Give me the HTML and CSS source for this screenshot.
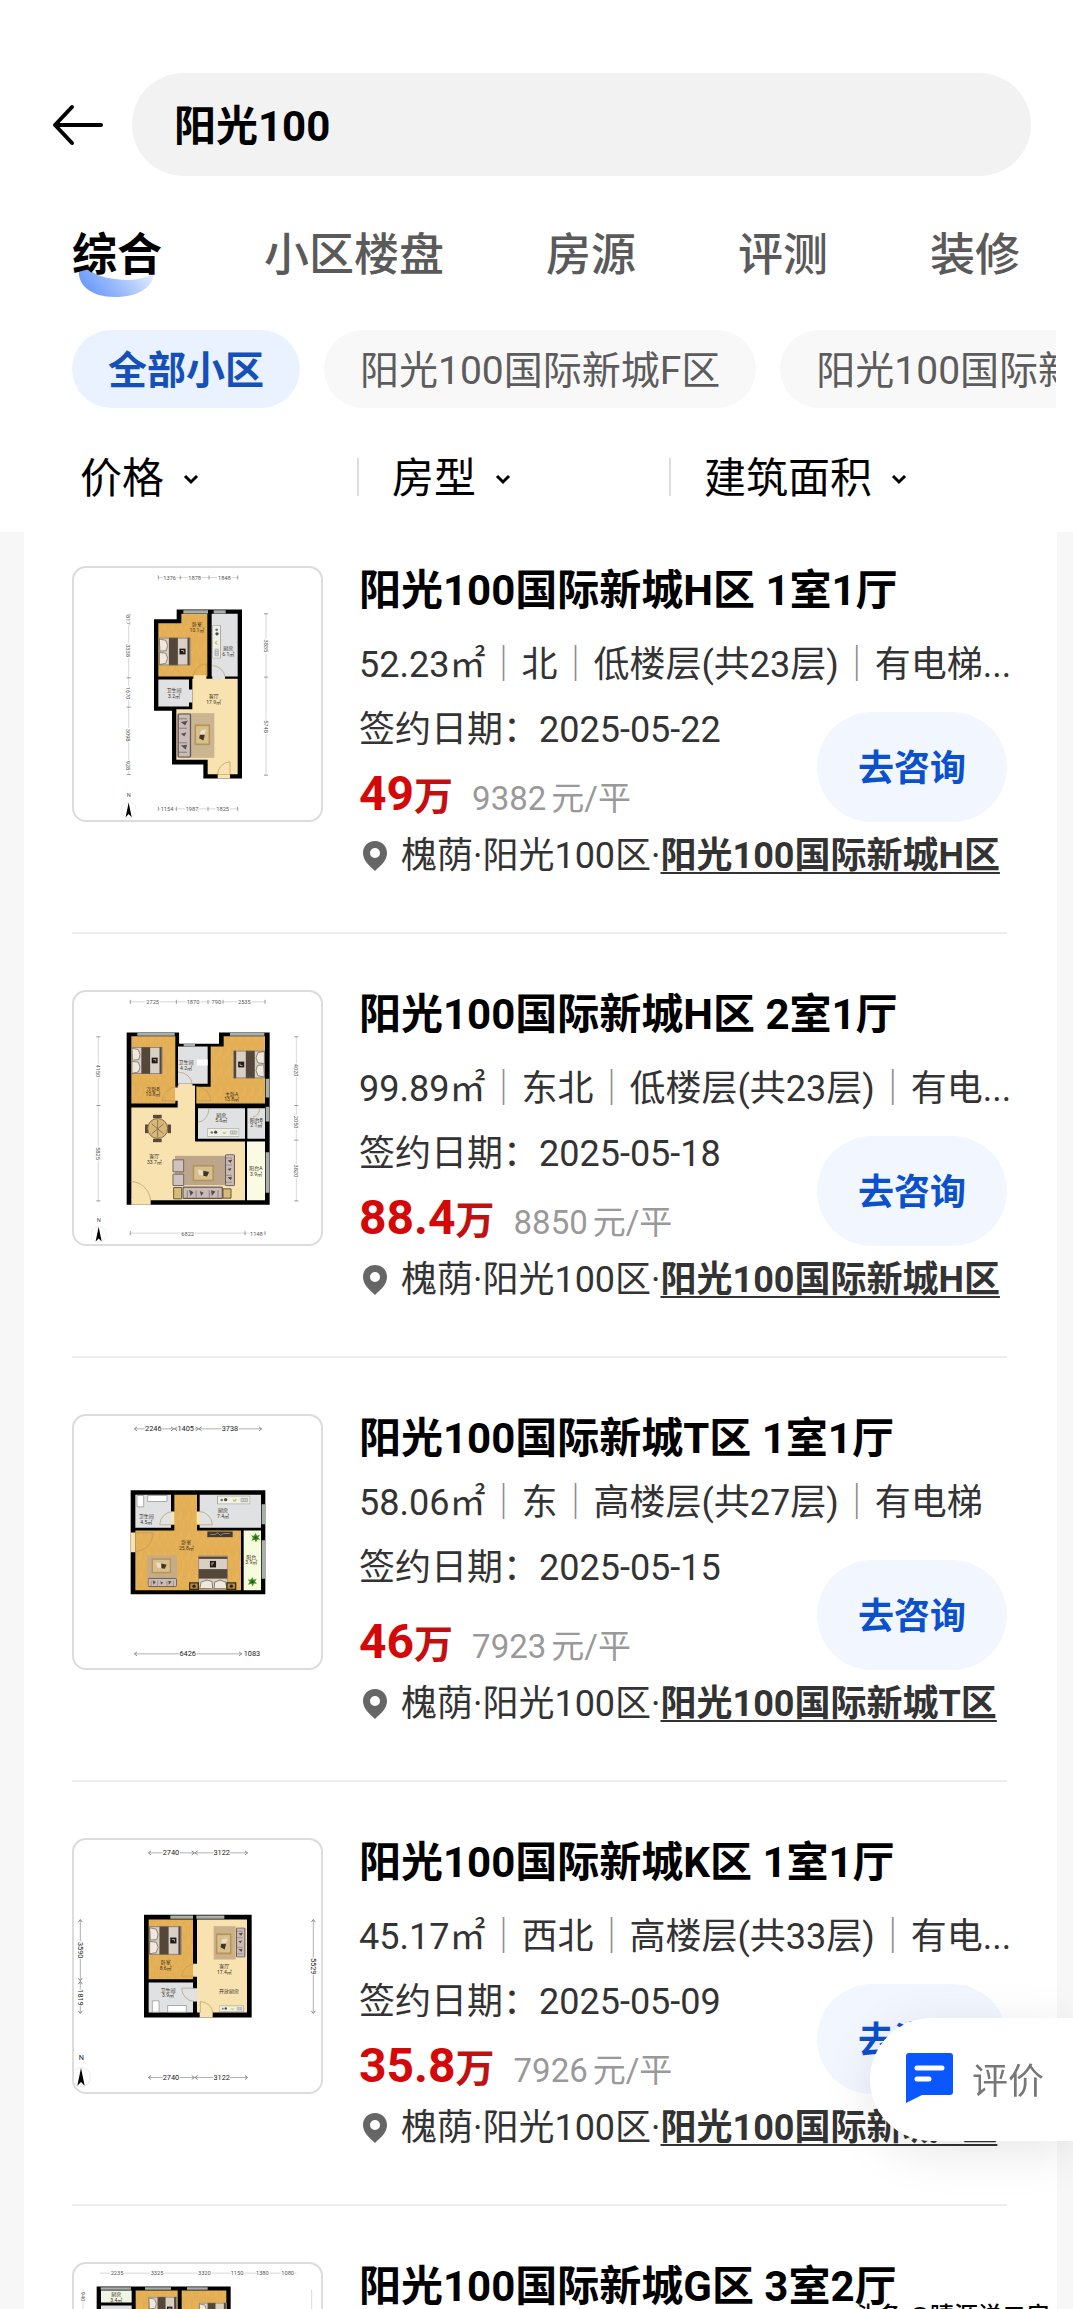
FILE: index.html
```html
<!DOCTYPE html>
<html lang="zh-CN">
<head>
    <meta charset="UTF-8">
    <meta name="viewport" content="width=device-width, initial-scale=1">
    <title>阳光100</title>
    <link rel="stylesheet" href="styles.css">
</head>
<body>

    <!-- 公用图形 -->
    <svg class="defs" width="0" height="0" aria-hidden="true">
        <defs>
            <linearGradient id="smile" x1="0" y1="0.3" x2="1" y2="0">
                <stop offset="0" stop-color="#6f9dfb"/>
                <stop offset="0.4" stop-color="#9dbcfd"/>
                <stop offset="1" stop-color="#edf3ff"/>
            </linearGradient>
            <pattern id="wood" width="24" height="60" patternUnits="userSpaceOnUse">
                <rect width="24" height="60" fill="#e6b259"/>
                <path d="M4 0v34M12 20v40M20 0v48" stroke="#dba54c" stroke-width="2"/>
            </pattern>
            <symbol id="bed" viewBox="0 0 100 86">
                <rect width="100" height="86" fill="#d9cfc4"/>
                <path d="M2 4l20 4 6 16-4 16-20 2zM2 46l20 2 6 16-6 16-20 4z" fill="#efe8dc" stroke="#8b8172" stroke-width="3"/>
                <rect x="32" width="28" height="86" fill="#55463a"/>
                <rect x="90" width="7" height="86" fill="#55463a"/>
                <rect x="65" y="34" width="19" height="18" fill="#1d1a18"/>
                <path d="M70 40h8v6" stroke="#b0a79a" stroke-width="3" fill="none"/>
                <rect x="1" y="1" width="98" height="84" fill="none" stroke="#6f6254" stroke-width="2"/>
            </symbol>
            <symbol id="sofa" viewBox="0 0 130 40">
                <rect width="130" height="40" rx="4" fill="#c9bcb8"/>
                <rect x="2" y="2" width="126" height="36" rx="4" fill="none" stroke="#63564f" stroke-width="4"/>
                <path d="M16 12v24M44 12v24M86 12v24M114 12v24" stroke="#8c7e78" stroke-width="3"/>
                <path d="M22 10l14 8-10 12zM92 12l14 4-12 14zM56 14l12 6-8 10z" fill="#5a4c46"/>
            </symbol>
            <symbol id="table" viewBox="0 0 60 46">
                <rect width="60" height="46" fill="#b5935c"/>
                <rect x="5" y="5" width="50" height="36" fill="#d8c08d"/>
                <path d="M14 12l14 4 4 14-14-2z" fill="#eadfca"/>
                <path d="M30 16l16 4-6 12-10-2z" fill="#453321"/>
            </symbol>
            <symbol id="stove" viewBox="0 0 100 26">
                <rect x="1" y="1" width="98" height="24" fill="#f1f0e8" stroke="#8f9285" stroke-width="2"/>
                <circle cx="14" cy="13" r="4" fill="#777"/>
                <circle cx="26" cy="12" r="5" fill="#4c4c40"/>
                <path d="M46 8l6 6 8-6-4 10h-6z" fill="#c9c35a"/>
                <path d="M72 8h20v10h-20zM79 8v10M86 8v10" fill="#ddd" stroke="#999" stroke-width="2"/>
            </symbol>
            <symbol id="compass" viewBox="0 0 60 100">
                <circle cx="30" cy="64" r="31" fill="none" stroke="#ddd" stroke-width="2"/>
                <path d="M30 34L42 92 30 80 18 92z" fill="#000"/>
            </symbol>
            <symbol id="plant" viewBox="0 0 30 30">
                <path d="M15 1l4 8 9-3-5 8 6 7-9-1-4 9-4-8-10 3 5-9-6-7 9 1z" fill="#3f8f25"/>
                <circle cx="15" cy="15" r="4" fill="#20570f"/>
            </symbol>
        </defs>
    </svg>

    <header class="top">
        <div class="search-row">
            <button class="back" aria-label="返回">
                <svg width="54" height="42" viewBox="0 0 54 42">
                    <path d="M20 3L3 21l17 18M3 21h46" fill="none" stroke="#000" stroke-width="4" stroke-linecap="round" stroke-linejoin="round"/>
                </svg>
            </button>
            <input class="search" type="text" value="阳光100" aria-label="搜索">
        </div>

        <nav class="tabs">
            <a class="tab active" href="#">综合
                <svg class="smile" width="78" height="28" viewBox="0 0 78 28">
                    <path d="M2 0C0 16 14 28 38 28C62 28 76 18 77 4C66 11 54 12 38 10C22 9 16 2 8 0z" fill="url(#smile)"/>
                </svg>
            </a>
            <a class="tab" href="#">小区楼盘</a>
            <a class="tab" href="#">房源</a>
            <a class="tab" href="#">评测</a>
            <a class="tab" href="#">装修</a>
        </nav>

        <div class="chips">
            <button class="chip selected">全部小区</button>
            <button class="chip">阳光100国际新城F区</button>
            <button class="chip">阳光100国际新城H区</button>
        </div>

        <div class="filters">
            <button class="filter">价格
                <svg class="arrow" width="16" height="12" viewBox="0 0 16 12"><path d="M2 3l6 6 6-6"/></svg>
            </button>
            <button class="filter">房型
                <svg class="arrow" width="16" height="12" viewBox="0 0 16 12"><path d="M2 3l6 6 6-6"/></svg>
            </button>
            <button class="filter">建筑面积
                <svg class="arrow" width="16" height="12" viewBox="0 0 16 12"><path d="M2 3l6 6 6-6"/></svg>
            </button>
        </div>
    </header>

    <main class="list">
        <div class="sheet">

            <article class="item">
                <div class="thumb">
                    <svg viewBox="43 54 741 753">
                        <path class="dim" d="M296 81h240M296 775h240M207 192v480M619 190v484"/>
                        <path class="tick" d="M296 75v12M362 75v12M448 75v12M534 75v12M296 769v12M350 769v12M445 769v12M534 769v12M201 192h12M201 382h12M201 470h12M201 672h12M613 190h12M613 380h12M613 674h12"/>
                        <g class="num">
                            <text x="330" y="88">1376</text><text x="405" y="88">1878</text><text x="494" y="88">1848</text>
                            <text x="322" y="782">1154</text><text x="397" y="782">1987</text><text x="489" y="782">1825</text>
                            <text transform="translate(200 208) rotate(90)">817</text>
                            <text transform="translate(200 300) rotate(90)">3338</text>
                            <text transform="translate(200 428) rotate(90)">1670</text>
                            <text transform="translate(200 554) rotate(90)">3098</text>
                            <text transform="translate(200 645) rotate(90)">928</text>
                            <text transform="translate(613 286) rotate(90)">3835</text>
                            <text transform="translate(613 528) rotate(90)">5748</text>
                            <text x="207" y="740">N</text>
                        </g>
                        <path class="wall" d="M351 177H547V684H431V642H337V481H283V206H351z"/>
                        <path fill="url(#wood)" d="M365 190H443V378H296V218H365z"/>
                        <path class="tile" d="M456 190H534V378H456zM296 387H388V468H296z"/>
                        <path class="cream" d="M398 385H534V671H444V628H350V476H398z"/>
                        <path class="window" d="M371 179H445V189H371zM462 179H498V189H462z"/>
                        <path class="cream" d="M401 374H440V388H401zM474 671H511V684H474z"/>
                        <path class="tile" d="M458 374H496V386H458zM388 417H398V456H388z"/>
                        <path class="door" d="M401 378A40 40 0 0 1 440 340V378M496 378A40 40 0 0 0 458 345M474 671A38 38 0 0 1 511 634V671"/>
                        <use href="#bed" x="297" y="259" width="96" height="88"/>
                        <rect x="368" y="488" width="96" height="134" fill="#cbb591"/>
                        <use href="#sofa" transform="translate(396 488) rotate(90)" width="134" height="44"/>
                        <use href="#table" transform="translate(452 520) rotate(90)" width="66" height="48"/>
                        <use href="#stove" transform="translate(484 224) rotate(90)" width="100" height="26"/>
                        <g class="room">
                            <text x="412" y="226">卧室</text><text x="412" y="243">10.1㎡</text>
                            <text x="506" y="299">厨房</text><text x="506" y="316">6.1㎡</text>
                            <text x="343" y="424">卫生间</text><text x="343" y="442">3.2㎡</text>
                            <text x="462" y="442">客厅</text><text x="462" y="460">17.9㎡</text>
                        </g>
                        <use href="#compass" x="184" y="730" width="46" height="76"/>
                    </svg>
                </div>
                <div class="info">
                    <h2>阳光100国际新城H区 1室1厅</h2>
                    <p class="spec cut">52.23㎡<i>｜</i>北<i>｜</i>低楼层(共23层)<i>｜</i>有电梯...</p>
                    <div class="deal">
                        <div class="deal-text">
                            <p class="date">签约日期：2025-05-22</p>
                            <p class="price"><b>49</b><strong>万</strong><span>9382</span><span>元/平</span></p>
                        </div>
                        <button class="ask">去咨询</button>
                    </div>
                    <p class="addr"><svg class="pin" width="26" height="32" viewBox="0 0 26 32"><path fill-rule="evenodd" d="M13 1C6 1 1 6 1 13c0 8 7 13 12 18 5-5 12-10 12-18C25 6 20 1 13 1zm0 7a5 5 0 1 1 0 10 5 5 0 0 1 0-10z"/></svg>槐荫·阳光100区·<a href="#">阳光100国际新城H区</a></p>
                </div>
            </article>

            <article class="item">
                <div class="thumb">
                    <svg viewBox="43 51 741 753">
                        <path class="dim" d="M210 79h408M210 773h408M116 182v496M710 182v496"/>
                        <path class="tick" d="M212 73v12M350 73v12M445 73v12M490 73v12M616 73v12M212 767v12M556 767v12M616 767v12M110 184h12M110 390h12M110 676h12M704 184h12M704 390h12M704 494h12M704 676h12"/>
                        <g class="num">
                            <text x="279" y="86">2725</text><text x="400" y="86">1870</text><text x="470" y="86">790</text><text x="554" y="86">2535</text>
                            <text x="384" y="780">6822</text><text x="590" y="780">1148</text>
                            <text transform="translate(110 286) rotate(90)">4150</text>
                            <text transform="translate(110 534) rotate(90)">5825</text>
                            <text transform="translate(704 284) rotate(90)">4020</text>
                            <text transform="translate(704 440) rotate(90)">2050</text>
                            <text transform="translate(704 586) rotate(90)">3820</text>
                            <text x="117" y="740">N</text>
                        </g>
                        <path class="wall" d="M201 171H359V204H478V171H630V688H201z"/>
                        <path fill="#fff" d="M359 168H478V204H359z"/>
                        <path fill="url(#wood)" d="M215 182H347V384H215zM453 213H492V182H616V384H453zM410 334H456V384H410z"/>
                        <path class="tile" d="M355 213H444V325H355zM415 398H556V490H415zM563 398H616V490H563z"/>
                        <path class="cream" d="M215 396H354V330H406V498H556V674H215z"/>
                        <path d="M562 498H616V674H562z" fill="#fbfbe4"/>
                        <path class="window" d="M233 172H345V181H233zM511 172H614V181H511zM372 204H406V213H372zM618 310H629V366H618zM618 394H629V438H618zM618 530H629V652H618z"/>
                        <path class="cream" d="M215 672H273V688H215zM346 336H356V376H346zM356 325H398V336H356z"/>
                        <path class="door" d="M213 618A60 62 0 0 1 273 678M308 376A44 44 0 0 1 350 334M308 376H350M356 290A42 40 0 0 1 398 328M410 334A42 42 0 0 1 453 376H410M448 398A34 42 0 0 1 415 440M600 398A20 26 0 0 1 580 424"/>
                        <use href="#bed" x="215" y="211" width="94" height="88"/>
                        <use href="#bed" transform="translate(616 311) rotate(180)" width="96" height="88"/>
                        <rect x="412" y="252" width="32" height="18" fill="#fff"/>
                        <use href="#stove" x="443" y="458" width="96" height="26"/>
                        <rect x="346" y="541" width="150" height="88" fill="#bda58c"/>
                        <path d="M340 553h32v36h-32zM340 596h32v34h-32z" fill="#cfc3c0" stroke="#756760" stroke-width="3"/>
                        <use href="#table" x="398" y="568" width="66" height="50"/>
                        <use href="#sofa" transform="translate(532 536) rotate(90)" width="96" height="42"/>
                        <use href="#sofa" x="368" y="632" width="122" height="40"/>
                        <path d="M342 636h24v34h-24zM490 640h24v28h-24z" fill="#d4bd7c" stroke="#6a5735" stroke-width="3"/>
                        <g fill="#5b4a3a"><rect x="280" y="418" width="26" height="10"/><rect x="280" y="490" width="26" height="10"/><rect x="256" y="447" width="10" height="26"/><rect x="324" y="447" width="10" height="26"/></g>
                        <circle cx="294" cy="459" r="30" fill="#d9b877" stroke="#7c6544" stroke-width="3"/>
                        <path d="M276 445l36 30M276 475l36-30M294 432v54" stroke="#8a7454" stroke-width="3"/>
                        <g class="room">
                            <text x="280" y="346">次卧B</text><text x="280" y="362">10.8㎡</text>
                            <text x="516" y="360">主卧A</text><text x="516" y="376">13.8㎡</text>
                            <text x="379" y="266">卫生间</text><text x="379" y="283">4.2㎡</text>
                            <text x="485" y="423">厨房</text><text x="485" y="440">5.6㎡</text>
                            <text x="590" y="438">阳台B</text><text x="590" y="455">2.1㎡</text>
                            <text x="284" y="546">客厅</text><text x="284" y="564">33.7㎡</text>
                            <text x="589" y="584">阳台A</text><text x="589" y="602">3.9㎡</text>
                        </g>
                        <use href="#compass" x="94" y="728" width="46" height="76"/>
                    </svg>
                </div>
                <div class="info">
                    <h2>阳光100国际新城H区 2室1厅</h2>
                    <p class="spec cut">99.89㎡<i>｜</i>东北<i>｜</i>低楼层(共23层)<i>｜</i>有电...</p>
                    <div class="deal">
                        <div class="deal-text">
                            <p class="date">签约日期：2025-05-18</p>
                            <p class="price"><b>88.4</b><strong>万</strong><span>8850</span><span>元/平</span></p>
                        </div>
                        <button class="ask">去咨询</button>
                    </div>
                    <p class="addr"><svg class="pin" width="26" height="32" viewBox="0 0 26 32"><path fill-rule="evenodd" d="M13 1C6 1 1 6 1 13c0 8 7 13 12 18 5-5 12-10 12-18C25 6 20 1 13 1zm0 7a5 5 0 1 1 0 10 5 5 0 0 1 0-10z"/></svg>槐荫·阳光100区·<a href="#">阳光100国际新城H区</a></p>
                </div>
            </article>

            <article class="item">
                <div class="thumb">
                    <svg viewBox="43 49 741 753">
                        <path class="dim dark" d="M224 86h382M224 761h322"/>
                        <path class="tick dark" d="M232 80l-8 6 8 6M334 80l8 6-8 6M352 80l-8 6 8 6M408 80l8 6-8 6M426 80l-8 6 8 6M598 80l8 6-8 6M232 755l-8 6 8 6M538 755l8 6-8 6"/>
                        <g class="num big">
                            <text x="281" y="93">2246</text><text x="378" y="93">1405</text><text x="511" y="93">3738</text>
                            <text x="384" y="768">6426</text><text x="577" y="768">1083</text>
                        </g>
                        <path class="wall" d="M213 270H617V582H213z"/>
                        <path fill="url(#wood)" d="M344 284H412V391H544V570H227V391H344z"/>
                        <path class="tile" d="M227 284H334V383H227zM420 284H604V383H420z"/>
                        <path d="M552 391H604V570H552z" fill="#f6fbdc"/>
                        <path class="window" d="M606 312H616V372H606zM606 420H616V536H606z"/>
                        <path class="cream" d="M213 397H227V456H213zM334 334H345V374H334zM411 334H421V374H411z"/>
                        <path class="door" d="M300 374A40 42 0 0 1 340 334M300 374H340M458 374A40 42 0 0 0 418 334M458 374H418M227 454A54 56 0 0 0 280 398H227"/>
                        <path d="M264 286h58v18h-58zM232 286h20v34h-20z" fill="#fff" stroke="#888" stroke-width="2"/>
                        <use href="#stove" x="472" y="286" width="100" height="27"/>
                        <rect x="443" y="394" width="76" height="17" fill="#403a33"/>
                        <path d="M452 403h14l8-5 8 8 10-6h18" stroke="#8a8577" stroke-width="3" fill="none"/>
                        <rect x="262" y="466" width="90" height="72" fill="#c6ab84"/>
                        <use href="#table" x="275" y="474" width="60" height="46"/>
                        <use href="#sofa" x="264" y="528" width="88" height="38"/>
                        <use href="#bed" transform="translate(416 568) rotate(-90)" width="102" height="88"/>
                        <path d="M390 548h26v20h-26zM502 548h26v20h-26z" fill="#b58b3b" stroke="#3b2c18" stroke-width="4"/>
                        <circle cx="403" cy="558" r="5" fill="#2b2114"/><circle cx="515" cy="558" r="5" fill="#2b2114"/>
                        <use href="#plant" x="573" y="398" width="30" height="30"/>
                        <use href="#plant" x="563" y="530" width="30" height="30"/>
                        <g class="room">
                            <text x="260" y="355">卫生间</text><text x="260" y="372">4.5㎡</text>
                            <text x="490" y="337">厨房</text><text x="490" y="354">7.4㎡</text>
                            <text x="380" y="432">卧室</text><text x="380" y="449">25.8㎡</text>
                            <text x="575" y="476">阳台</text><text x="575" y="492">3.9㎡</text>
                        </g>
                    </svg>
                </div>
                <div class="info">
                    <h2>阳光100国际新城T区 1室1厅</h2>
                    <p class="spec">58.06㎡<i>｜</i>东<i>｜</i>高楼层(共27层)<i>｜</i>有电梯</p>
                    <div class="deal">
                        <div class="deal-text">
                            <p class="date">签约日期：2025-05-15</p>
                            <p class="price"><b>46</b><strong>万</strong><span>7923</span><span>元/平</span></p>
                        </div>
                        <button class="ask">去咨询</button>
                    </div>
                    <p class="addr"><svg class="pin" width="26" height="32" viewBox="0 0 26 32"><path fill-rule="evenodd" d="M13 1C6 1 1 6 1 13c0 8 7 13 12 18 5-5 12-10 12-18C25 6 20 1 13 1zm0 7a5 5 0 1 1 0 10 5 5 0 0 1 0-10z"/></svg>槐荫·阳光100区·<a href="#">阳光100国际新城T区</a></p>
                </div>
            </article>

            <article class="item">
                <div class="thumb">
                    <svg viewBox="43 47 741 753">
                        <path class="dim dark" d="M266 84h298M266 758h298M62 284v280M761 284v280"/>
                        <path class="tick dark" d="M274 78l-8 6 8 6M396 78l8 6-8 6M414 78l-8 6 8 6M556 78l8 6-8 6M274 752l-8 6 8 6M396 752l8 6-8 6M414 752l-8 6 8 6M556 752l8 6-8 6M56 292l6-8 6 8M56 460l6 8 6-8M56 478l6-8 6 8M56 558l6 8 6-8M755 292l6-8 6 8M755 558l6 8 6-8"/>
                        <g class="num big">
                            <text x="334" y="91">2740</text><text x="486" y="91">3122</text>
                            <text x="334" y="765">2740</text><text x="486" y="765">3122</text>
                            <text transform="translate(56 376) rotate(90)">3590</text>
                            <text transform="translate(56 518) rotate(90)">1819</text>
                            <text transform="translate(755 424) rotate(90)">5529</text>
                            <text x="65" y="706">N</text>
                        </g>
                        <path class="wall" d="M253 270H576V578H253z"/>
                        <path fill="url(#wood)" d="M267 284H400V463H267z"/>
                        <path class="tile" d="M267 473H400V563H267z"/>
                        <path class="cream" d="M412 284H562V563H412zM400 417H413V456H400zM420 562H459V578H420z"/>
                        <path class="tile" d="M400 490H412V530H400z"/>
                        <path class="window" d="M332 272H400V282H332zM410 272H494V282H410z"/>
                        <path class="door" d="M366 454A42 40 0 0 1 404 417M366 454H404M366 490H404M366 490A40 40 0 0 0 404 530M422 563V530A38 36 0 0 1 459 563"/>
                        <use href="#bed" x="268" y="303" width="98" height="88"/>
                        <rect x="462" y="304" width="66" height="100" fill="#cbb08a"/>
                        <use href="#table" transform="translate(516 324) rotate(90)" width="66" height="48"/>
                        <use href="#sofa" transform="translate(562 308) rotate(90)" width="90" height="38"/>
                        <path d="M278 528h20v34h-20zM324 542h56v20h-56z" fill="#fff" stroke="#888" stroke-width="2"/>
                        <use href="#stove" x="479" y="540" width="74" height="24"/>
                        <g class="room">
                            <text x="318" y="418">卧室</text><text x="318" y="435">8.6㎡</text>
                            <text x="325" y="501">卫生间</text><text x="325" y="518">3.9㎡</text>
                            <text x="494" y="431">客厅</text><text x="494" y="448">17.4㎡</text>
                            <text x="508" y="506">开放厨房</text>
                        </g>
                        <use href="#compass" x="34" y="698" width="60" height="92"/>
                    </svg>
                </div>
                <div class="info">
                    <h2>阳光100国际新城K区 1室1厅</h2>
                    <p class="spec cut">45.17㎡<i>｜</i>西北<i>｜</i>高楼层(共33层)<i>｜</i>有电...</p>
                    <div class="deal">
                        <div class="deal-text">
                            <p class="date">签约日期：2025-05-09</p>
                            <p class="price"><b>35.8</b><strong>万</strong><span>7926</span><span>元/平</span></p>
                        </div>
                        <button class="ask">去咨询</button>
                    </div>
                    <p class="addr"><svg class="pin" width="26" height="32" viewBox="0 0 26 32"><path fill-rule="evenodd" d="M13 1C6 1 1 6 1 13c0 8 7 13 12 18 5-5 12-10 12-18C25 6 20 1 13 1zm0 7a5 5 0 1 1 0 10 5 5 0 0 1 0-10z"/></svg>槐荫·阳光100区·<a href="#">阳光100国际新城K区</a></p>
                </div>
            </article>

            <article class="item">
                <div class="thumb">
                    <svg viewBox="43 44 741 753">
                        <path class="dim" d="M120 70h590M70 120v400M756 120v400"/>
                        <g class="num">
                            <text x="172" y="76">2235</text><text x="292" y="76">3325</text><text x="434" y="76">3320</text><text x="532" y="76">1150</text><text x="608" y="76">1380</text><text x="684" y="76">1080</text>
                            <text transform="translate(64 140) rotate(90)">940</text>
                        </g>
                        <path class="wall" d="M111 110H513V400H111z"/>
                        <path d="M124 122H216V158H124z" fill="#eef5e4"/>
                        <path class="tile" d="M124 167H216V300H124z"/>
                        <path fill="url(#wood)" d="M228 122H354V300H228zM366 122H500V300H366z"/>
                        <path class="window" d="M123 112H214V120H123zM256 112H334V120H256zM382 112H444V120H382z"/>
                        <use href="#bed" x="266" y="140" width="86" height="76"/>
                        <use href="#bed" x="417" y="158" width="84" height="74"/>
                        <g class="room"><text x="170" y="140">厨房</text><text x="170" y="156">3.4㎡</text></g>
                    </svg>
                </div>
                <div class="info">
                    <h2>阳光100国际新城G区 3室2厅</h2>
                </div>
            </article>

        </div>
    </main>

    <!-- 悬浮评价按钮 -->
    <button class="review">
        <svg width="47" height="50" viewBox="0 0 47 50">
            <path d="M3 0h41a3 3 0 0 1 3 3v36a3 3 0 0 1-3 3H16L0 50V3a3 3 0 0 1 3-3z" fill="#0a56ff"/>
            <path d="M11 15h25M11 26h12" stroke="#fff" stroke-width="5" stroke-linecap="round"/>
        </svg>
        评价
    </button>

    <div class="mark">头条 @晴源说二房</div>

</body>
</html>
```

FILE: styles.css
```css
* {
    box-sizing: border-box;
}

body {
    margin: 0;
    height: 100vh;
    overflow: hidden;
    display: flex;
    flex-direction: column;
    position: relative;
    background-color: #ffffff;
    color: #000000;
    font-family: Roboto, "Noto Sans CJK SC", sans-serif;
}

h2, p {
    margin: 0;
    white-space: nowrap;
}

button {
    border: none;
    background: none;
    padding: 0;
    font-family: inherit;
    color: inherit;
    cursor: pointer;
}

.defs {
    position: absolute;
}

/* 顶部搜索 */
.top {
    flex: none;
    padding-top: 73px;
}

.search-row {
    display: flex;
    align-items: center;
    padding: 0 42px 0 52px;
}

.back {
    width: 80px;
    display: flex;
}

.search {
    flex: 1;
    min-width: 0;
    height: 103px;
    border: none;
    border-radius: 52px;
    background-color: #f2f2f2;
    padding: 0 42px 4px;
    font-family: inherit;
    font-size: 42px;
    font-weight: bold;
    color: #000000;
    outline: none;
}

/* 标签 */
.tabs {
    display: flex;
    gap: 102px;
    margin-top: 50px;
    padding-left: 72px;
    overflow: hidden;
}

.tab {
    position: relative;
    flex: none;
    height: 74px;
    font-size: 45px;
    line-height: 60px;
    font-weight: 500;
    color: #5a5a5a;
    text-decoration: none;
}

.tab.active {
    color: #000000;
    font-weight: bold;
}

.smile {
    position: absolute;
    left: 5px;
    top: 43px;
    z-index: -1;
}

.chips {
    display: flex;
    gap: 24px;
    margin: 30px 17px 0 0;
    padding-left: 72px;
    overflow: hidden;
}

.chip {
    flex: none;
    height: 78px;
    padding: 0 36px 4px;
    border-radius: 39px;
    background-color: #f8f8f8;
    color: #5c5c5c;
    font-size: 39px;
    white-space: nowrap;
}

.chip.selected {
    background-color: #eaf2ff;
    color: #1450b8;
    font-weight: bold;
}

.filters {
    display: grid;
    grid-template-columns: 1fr 1fr 1fr;
    align-items: center;
    height: 60px;
    margin: 39px 0 25px;
    padding: 0 92px 0 45px;
}

.filter {
    display: flex;
    align-items: center;
    gap: 19px;
    height: 38px;
    padding: 0 0 6px 33px;
    border-left: 2px solid #dddddd;
    font-size: 42px;
    white-space: nowrap;
}

.filter:first-child {
    border-color: transparent;
}

.arrow {
    flex: none;
    margin-top: 10px;
}

.arrow path {
    fill: none;
    stroke: #000000;
    stroke-width: 3;
}

/* 成交列表 */
.list {
    flex: 1;
    min-height: 0;
    overflow: hidden;
    background-color: #f7f7f7;
    padding: 0 16px 0 24px;
}

.sheet {
    background-color: #ffffff;
    padding: 0 50px 0 48px;
}

.item {
    display: flex;
    gap: 36px;
    height: 424px;
    padding-top: 56px;
    border-bottom: 2px solid #ededed;
}

.item:first-child {
    height: 402px;
    padding-top: 34px;
}

.thumb {
    flex: none;
    width: 251px;
    height: 256px;
    border: 2px solid #dcdcdc;
    border-radius: 14px;
    overflow: hidden;
}

.thumb svg {
    display: block;
    width: 100%;
    height: 100%;
}

.info {
    flex: 1;
    min-width: 0;
    display: flex;
    flex-direction: column;
    height: 312px;
    padding-top: 2px;
}

.info h2 {
    font-size: 42px;
    line-height: 46px;
    font-weight: bold;
}

.spec, .date, .addr {
    font-size: 36px;
    line-height: 44px;
    color: #333333;
}

.spec {
    margin-top: 19px;
}

.spec.cut {
    margin-top: 29px;
}

.spec i {
    font-style: normal;
    color: #8c8c8c;
}

.deal {
    flex: 1;
    display: flex;
    justify-content: space-between;
    align-items: flex-end;
    padding-top: 21px;
}

.deal-text {
    align-self: stretch;
    display: flex;
    flex-direction: column;
    justify-content: space-between;
}

.price {
    display: flex;
    align-items: baseline;
    line-height: 46px;
    font-size: 33px;
    color: #999999;
}

.price b {
    font-size: 48px;
    color: #d40808;
}

.price strong {
    margin-right: 19px;
    font-size: 39px;
    color: #c01010;
}

.price span + span {
    margin-left: 5px;
}

.ask {
    width: 190px;
    height: 110px;
    padding-bottom: 4px;
    border-radius: 55px;
    background-color: #f1f6ff;
    color: #0b50cc;
    font-size: 36px;
    font-weight: bold;
}

.addr {
    display: flex;
    align-items: center;
    margin-top: 12px;
}

.addr a {
    color: #333333;
    font-weight: bold;
    text-decoration: underline;
    text-decoration-thickness: 2px;
    text-underline-offset: 4px;
}

.pin {
    margin: 0 13px 0 3px;
    fill: #666666;
}

/* 户型图 */
.wall {
    fill: #000000;
}

.tile {
    fill: #dfe1e3;
}

.cream {
    fill: #f7e2b0;
}

.window {
    fill: #a9b0ac;
}

.door {
    fill: none;
    stroke: #b8995c;
    stroke-width: 2;
}

.dim {
    fill: none;
    stroke: #c4c4c4;
    stroke-width: 2;
}

.tick {
    fill: none;
    stroke: #999999;
    stroke-width: 3;
}

.dim.dark, .tick.dark {
    stroke: #8a8a8a;
}

.num text {
    font-size: 17px;
    text-anchor: middle;
    fill: #555555;
    stroke: #ffffff;
    stroke-width: 6px;
    paint-order: stroke;
}

.num.big text {
    font-size: 22px;
    fill: #222222;
}

.room text {
    font-size: 15px;
    text-anchor: middle;
    fill: #3a2f20;
}

.review {
    position: fixed;
    right: 0;
    bottom: 168px;
    display: flex;
    align-items: center;
    gap: 19px;
    height: 123px;
    padding: 0 29px 4px 36px;
    border-radius: 62px 0 0 62px;
    background-color: #ffffff;
    box-shadow: 0 10px 50px rgba(0, 0, 0, 0.1);
    font-size: 36px;
    color: #777777;
}

.mark {
    position: absolute;
    right: 23px;
    bottom: -21px;
    font-size: 24px;
    line-height: 28px;
    font-weight: 500;
    text-shadow: 0 0 3px #ffffff, 0 0 3px #ffffff;
}
```
